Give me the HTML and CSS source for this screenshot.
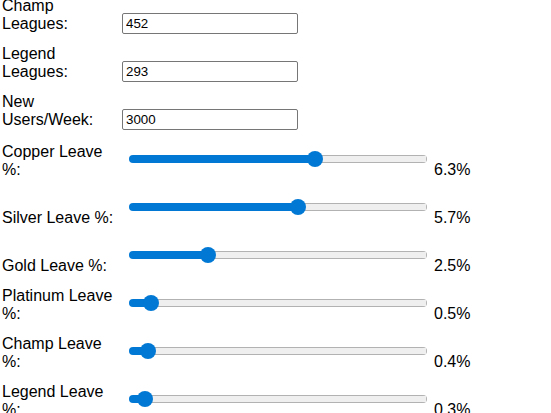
FILE: index.html
```html
<!DOCTYPE html>
<html lang="en">
<head>
<meta charset="utf-8">
<title>League Settings</title>
<link rel="stylesheet" href="styles.css">
</head>
<body>
<form class="settings">
  <div class="field">
    <label class="label" for="champLeagues">Champ Leagues:</label>
    <input class="num" id="champLeagues" type="text" value="452">
  </div>
  <div class="field">
    <label class="label" for="legendLeagues">Legend Leagues:</label>
    <input class="num" id="legendLeagues" type="text" value="293">
  </div>
  <div class="field">
    <label class="label" for="newUsers">New Users/Week:</label>
    <input class="num" id="newUsers" type="text" value="3000">
  </div>

  <div class="slider-row first">
    <label class="label" for="copperLeave">Copper Leave %:</label>
    <input class="range" id="copperLeave" type="range" min="0" max="10" step="0.1" value="6.3" style="--f:0.63">
    <span class="value">6.3%</span>
  </div>
  <div class="slider-row">
    <label class="label" for="silverLeave">Silver Leave %:</label>
    <input class="range" id="silverLeave" type="range" min="0" max="10" step="0.1" value="5.7" style="--f:0.57">
    <span class="value">5.7%</span>
  </div>
  <div class="slider-row">
    <label class="label" for="goldLeave">Gold Leave %:</label>
    <input class="range" id="goldLeave" type="range" min="0" max="10" step="0.1" value="2.5" style="--f:0.25">
    <span class="value">2.5%</span>
  </div>
  <div class="slider-row">
    <label class="label" for="platinumLeave">Platinum Leave %:</label>
    <input class="range" id="platinumLeave" type="range" min="0" max="10" step="0.1" value="0.5" style="--f:0.05">
    <span class="value">0.5%</span>
  </div>
  <div class="slider-row">
    <label class="label" for="champLeave">Champ Leave %:</label>
    <input class="range" id="champLeave" type="range" min="0" max="10" step="0.1" value="0.4" style="--f:0.04">
    <span class="value">0.4%</span>
  </div>
  <div class="slider-row">
    <label class="label" for="legendLeave">Legend Leave %:</label>
    <input class="range" id="legendLeave" type="range" min="0" max="10" step="0.1" value="0.3" style="--f:0.03">
    <span class="value">0.3%</span>
  </div>
</form>
</body>
</html>
```
FILE: styles.css
```css
* {
  box-sizing: border-box;
}

html,
body {
  margin: 0;
  padding: 0;
  background: #ffffff;
  overflow: hidden;
}

body {
  font-family: "Liberation Sans", Arial, sans-serif;
  font-size: 16px;
  line-height: 18px;
  color: #000000;
}

.settings {
  display: flex;
  flex-direction: column;
  padding-left: 2px;
  margin-top: -14px;
}

.label {
  display: block;
}

.field {
  display: grid;
  grid-template-columns: 120px 176px;
  align-items: end;
  height: 48px;
}

.field .label {
  margin-bottom: 1px;
}

.num {
  width: 176px;
  height: 21px;
  margin: 0;
  padding: 0 3px;
  border: 1px solid #767676;
  border-radius: 2px;
  background: #ffffff;
  color: #000000;
  font-family: "Liberation Sans", Arial, sans-serif;
  font-size: 13.33px;
}

.slider-row {
  display: grid;
  grid-template-columns: 120px 298px auto;
  column-gap: 7px;
  align-items: end;
  height: 48px;
}

.slider-row.first {
  height: 49px;
}

.range {
  -webkit-appearance: none;
  appearance: none;
  width: 298px;
  height: 16px;
  margin: 0 0 12px;
  padding: 0;
  background: transparent;
}

.range::-webkit-slider-runnable-track {
  height: 8px;
  border-radius: 4px;
  background:
    linear-gradient(#0078d4, #0078d4) 0 0 / calc(8px + var(--f) * 282px) 100% no-repeat,
    linear-gradient(#efefef, #efefef) 1px 1px / calc(100% - 2px) 6px no-repeat,
    #b2b2b2;
}

.range::-webkit-slider-thumb {
  -webkit-appearance: none;
  appearance: none;
  width: 16px;
  height: 16px;
  margin-top: -4px;
  border: 0;
  border-radius: 50%;
  background: #0078d4;
}

.value {
  white-space: nowrap;
}
```
